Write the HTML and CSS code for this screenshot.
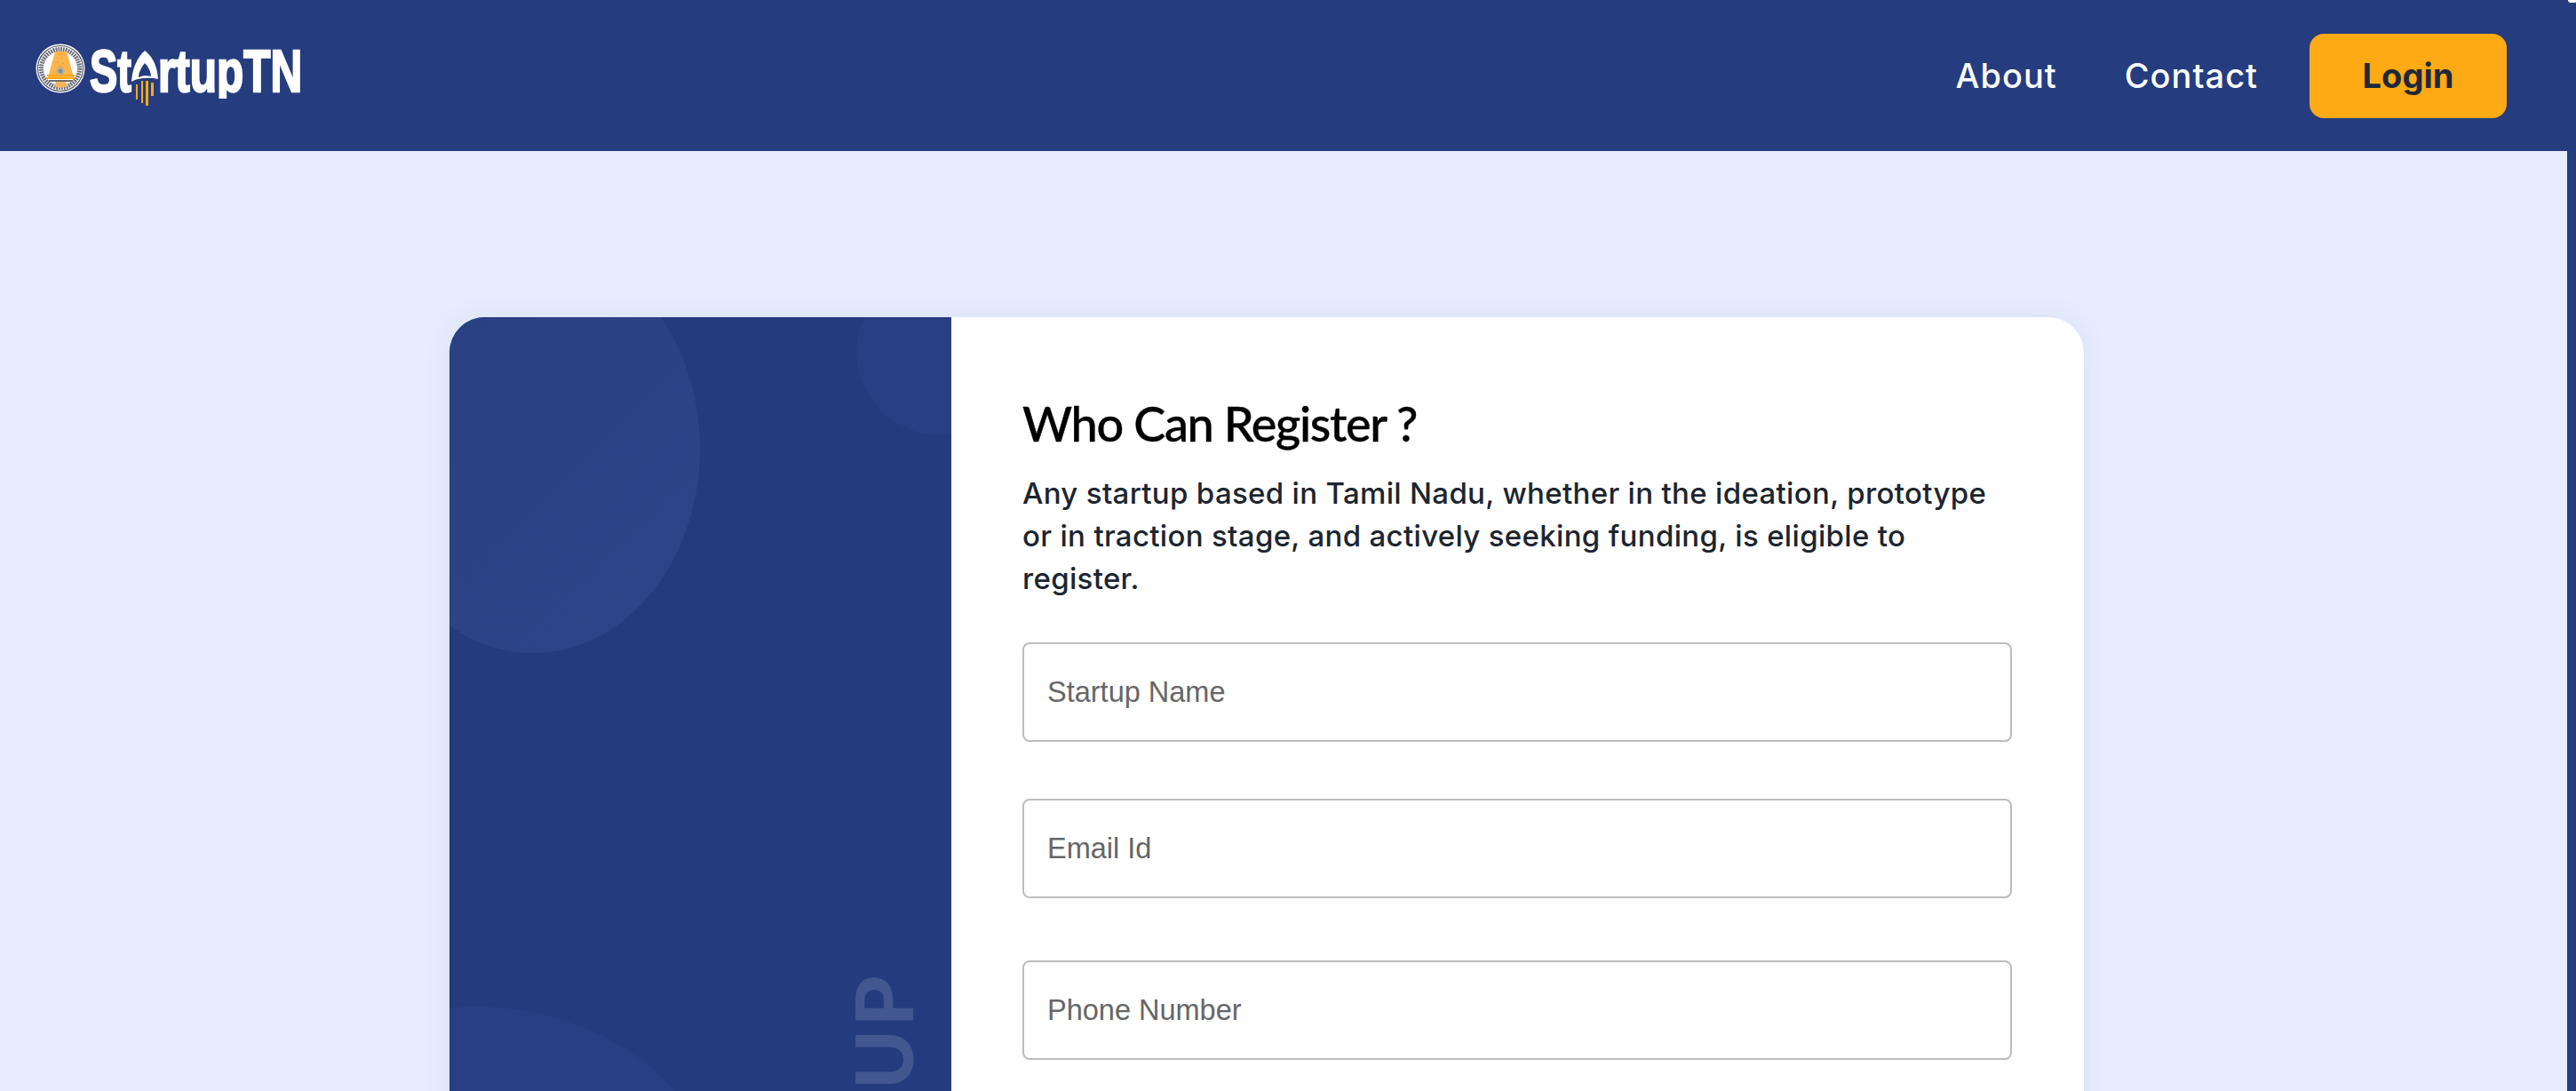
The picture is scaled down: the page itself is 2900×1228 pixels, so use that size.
FILE: index.html
```html
<!DOCTYPE html>
<html lang="en">
<head>
<meta charset="utf-8">
<title>StartupTN</title>
<link rel="stylesheet" href="styles.css">
</head>
<body>
<div class="page">
  <div class="main">
    <header class="header">
      <a class="logo" href="#">
        <svg class="emblem" viewBox="0 0 56 56" aria-hidden="true">
          <circle cx="28" cy="28" r="27.5" fill="#fff"/>
          <circle cx="28" cy="28" r="25.5" fill="none" stroke="#4f5460" stroke-width="1.2"/>
          <circle cx="28" cy="28" r="21.5" fill="none" stroke="#666a76" stroke-width="5" stroke-dasharray="1.8 1"/>
          <circle cx="28" cy="28" r="18.5" fill="#fff"/>
          <path d="M22 9H35L43 38H14Z" fill="#fdb44b"/>
          <path d="M13 35H44V37H13Z" fill="#fda912"/>
          <path d="M12 38H45V40H12Z" fill="#fda912"/>
          <path d="M15 41H42V43H15Z" fill="#6d6d6d"/>
          <path d="M23 43H34L36 48L28 50L21 48Z" fill="#f4b45a"/>
          <circle cx="28" cy="31" r="5" fill="#c9b48a"/>
          <circle cx="28" cy="31" r="2.5" fill="#7e8ca8"/>
          <path d="M27 12v1M30 16v1M25 20v1M31 22v1M28 25v1" stroke="#c98a3c" stroke-width="1.2"/>
        </svg>
        <span class="logo-st">St</span>
        <svg class="rocket" viewBox="0 0 30 62" aria-hidden="true">
          <path d="M15 0C23 6 29 16 30 32C22 30 8 30 0 35C1 19 7 7 15 0ZM15 14C10 20 8 26 8 30C12 28 18 28 22 29C22 25 20 19 15 14Z" fill="#fff" fill-rule="evenodd"/>
          <path d="M5 38h2v17H5ZM11 34h2v25h-2ZM16 34h3v30h-3ZM22 36h3v15h-3Z" fill="#fdaa15"/>
        </svg>
        <span class="logo-rest">rtupTN</span>
      </a>
      <nav class="nav">
        <a class="nav-link" href="#">About</a>
        <a class="nav-link" href="#">Contact</a>
        <a class="login" href="#">Login</a>
      </nav>
    </header>
    <main class="content">
      <section class="card">
        <aside class="side">
          <span class="blob blob-a"></span>
          <span class="blob blob-b"></span>
          <span class="blob blob-c"></span>
          <span class="side-word">STARTUP</span>
        </aside>
        <div class="form-panel">
          <h1 class="title">Who Can Register ?</h1>
          <p class="lead">Any startup based in Tamil Nadu, whether in the ideation, prototype or in traction stage, and actively seeking funding, is eligible to register.</p>
          <form class="form">
            <input class="field" type="text" placeholder="Startup Name">
            <input class="field field-email" type="text" placeholder="Email Id">
            <input class="field field-phone" type="text" placeholder="Phone Number">
          </form>
        </div>
      </section>
    </main>
  </div>
  <div class="edge"><span class="edge-nib"></span></div>
</div>
</body>
</html>
```

FILE: styles.css
```css
* { box-sizing: border-box; }
html, body { margin: 0; height: 100%; overflow: hidden; }
a { text-decoration: none; color: inherit; }

.page { display: flex; height: 1228px; overflow: hidden; background: #e7edfe; }
.main { flex: 1; min-width: 0; display: flex; flex-direction: column; }
.edge { width: 10px; background: #263d7e; position: relative; }
.edge-nib { position: absolute; top: 0; left: 1px; width: 9px; height: 3px; background: #fff; border-radius: 0 0 2px 4px; }

.header { height: 170px; flex: none; background: #253c7f; display: flex; justify-content: space-between; align-items: center; padding: 0 68px 0 40px; }
.logo { display: flex; align-self: flex-start; margin-top: 49px; height: 70px; color: #fff; font-family: "Liberation Sans", sans-serif; font-weight: 700; font-size: 66px; line-height: 70px; }
.emblem { width: 56px; height: 56px; flex: none; margin-right: 5px; }
.logo-st, .logo-rest { display: block; white-space: nowrap; -webkit-text-stroke: 2.4px #fff; transform-origin: left top; margin-top: -4px; clip-path: inset(-5px -200px 8px -5px); }
.logo-st { width: 47px; transform: scaleX(.71); }
.logo-rest { width: 160px; transform: scaleX(.75); }
.rocket { width: 30px; height: 62px; flex: none; margin-top: 8px; }

.nav { display: flex; align-items: center; font-family: Inter, sans-serif; font-size: 38px; }
.nav-link { color: #fff; font-weight: 500; letter-spacing: 1px; margin-right: 76px; }
.nav-link + .nav-link { margin-right: 58px; }
.login { width: 222px; height: 95px; border-radius: 16px; background: #fdaa15; color: #1f2937; font-weight: 700; display: flex; align-items: center; justify-content: center; }

.content { flex: 1; min-height: 0; padding: 187px 0 0 506px; }
.card { width: 1840px; height: 1400px; display: flex; border-radius: 40px; background: #fff; box-shadow: 0 0 32px rgba(40, 50, 120, .07); }
.side { width: 565px; flex: none; position: relative; overflow: hidden; background: #243b7e; border-radius: 40px 0 0 40px; }
.blob { position: absolute; border-radius: 50%; }
.blob-a { left: -94px; top: -82px; width: 376px; height: 460px; background: linear-gradient(135deg, #283f82, #2e4589); }
.blob-b { left: 458px; top: -53px; width: 192px; height: 186px; background: #293f83; }
.blob-c { left: -252px; top: 776px; width: 560px; height: 460px; background: #283f83; }
.side-word { position: absolute; top: 737px; left: 442px; height: 700px; writing-mode: vertical-rl; transform: rotate(180deg); text-align: right; font-family: Lato, sans-serif; font-weight: 900; font-size: 90px; line-height: 90px; letter-spacing: 4px; color: rgba(255, 255, 255, .14); }

.form-panel { flex: 1; padding: 88px 81px 0 80px; }
.title { margin: 0 0 22px; font-family: Lato, sans-serif; font-weight: 500; font-size: 54px; line-height: 64px; letter-spacing: -1.3px; color: #000; -webkit-text-stroke: .4px #000; }
.lead { margin: 0 0 48px; max-width: 1110px; font-family: Inter, sans-serif; font-weight: 500; font-size: 33px; line-height: 48px; letter-spacing: .32px; color: #1c2530; }
.form { display: flex; flex-direction: column; }
.field { width: 1114px; height: 112px; padding: 0 26px; border: 2px solid #bdbdc0; border-radius: 8px; background: #fff; font-family: "Liberation Sans", Arial, sans-serif; font-size: 32.5px; color: #333; outline: none; }
.field::placeholder { color: #666; opacity: 1; }
.field-email { margin-top: 64px; }
.field-phone { margin-top: 70px; }
```
